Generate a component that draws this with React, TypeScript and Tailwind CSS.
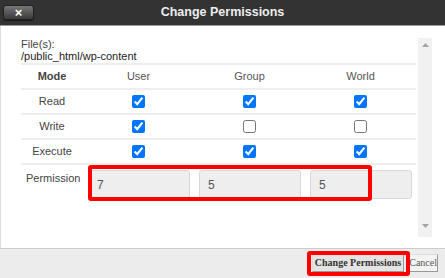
const ROWS: { label: string; user: boolean; group: boolean; world: boolean }[] = [
  { label: 'Read', user: true, group: true, world: true },
  { label: 'Write', user: true, group: false, world: false },
  { label: 'Execute', user: true, group: true, world: true },
];

function Box({ checked }: { checked: boolean }) {
  return (
    <div className="flex items-center justify-center">
      <input type="checkbox" checked={checked} readOnly className="m-0 size-[13px] accent-[#0075ff]" />
    </div>
  );
}

export default function App() {
  return (
    <div className="relative flex h-[278px] w-[445px] flex-col overflow-hidden bg-white font-['Liberation_Sans',Arial,sans-serif] text-[11px] text-[#333]">
      {/* title bar */}
      <div className="grid h-[26px] shrink-0 grid-cols-[36px_1fr_36px] items-center border-b border-[#999] bg-[#333]">
        <button className="ml-[3px] flex h-[15px] w-[31px] items-center justify-center rounded-[3px] border border-[#222] bg-gradient-to-b from-[#777] to-[#3a3a3a] text-[13px] font-bold leading-none text-white shadow-[0_1px_1px_rgba(0,0,0,0.6)]">
          ×
        </button>
        <div className="text-center text-[12.5px] font-bold text-[#eee]">Change Permissions</div>
        <div />
      </div>

      {/* body */}
      <div className="flex min-h-0 flex-1 border-l border-[#ddd]">
        <div className="flex-1 pl-[20px] pr-[2px] pt-[12px]">
          <div className="leading-[12px] text-[#444]">File(s):</div>
          <div className="leading-[13px] text-[#222]">/public_html/wp-content</div>

          <div className="grid grid-cols-[62px_111px_111px_111px] text-center">
            <div className="col-span-4 grid h-[25px] grid-cols-subgrid items-center border-t-2 border-[#eee]">
              <div className="font-bold text-[#444]">Mode</div>
              <div className="text-[#555]">User</div>
              <div className="text-[#555]">Group</div>
              <div className="text-[#555]">World</div>
            </div>
            {ROWS.map((r) => (
              <div key={r.label} className="col-span-4 grid h-[25px] grid-cols-subgrid items-center border-t-2 border-[#eee]">
                <div className="text-[#444]">{r.label}</div>
                <Box checked={r.user} />
                <Box checked={r.group} />
                <Box checked={r.world} />
              </div>
            ))}
            <div className="col-span-4 flex border-t-2 border-[#eee] pt-[5px] text-left">
              <div className="w-[67px] shrink-0 pl-[5px] text-[#444]">Permission</div>
              <div className="grid grid-cols-[102px_102px_102px] gap-[9px]">
                {['7', '5', '5'].map((v, i) => (
                  <div
                    key={i}
                    className="flex h-[29px] items-center rounded-[3px] border border-[#d8d8d8] bg-[#eeeeee] pl-[8px] text-[12px] text-[#555]"
                  >
                    {v}
                  </div>
                ))}
              </div>
            </div>
          </div>
        </div>

        {/* scrollbar */}
        <div className="mb-[11px] mr-[13px] mt-[12px] flex w-[14px] flex-col items-center justify-between bg-[#f1f1f1] py-[5px]">
          <svg width="7" height="4" viewBox="0 0 7 4">
            <path d="M0 4 L3.5 0 L7 4 Z" fill="#a3a3a3" />
          </svg>
          <svg width="7" height="4" viewBox="0 0 7 4" className="mb-[4px]">
            <path d="M0 0 L3.5 4 L7 0 Z" fill="#a3a3a3" />
          </svg>
        </div>
      </div>

      {/* footer */}
      <div className="flex h-[30px] shrink-0 items-start justify-end gap-[4px] border-t border-[#ccc] bg-[#ececec] pr-[7px] pt-[5px] font-['Liberation_Serif','Times_New_Roman',serif]">
        <button className="h-[18px] border border-[#999] border-t-[#ddd] border-l-[#ddd] bg-[#e4e4e4] px-[2px] text-[10px] font-bold leading-none text-[#333]">
          Change Permissions
        </button>
        <button className="h-[18px] border border-[#999] border-t-[#ddd] border-l-[#ddd] bg-[#f4f4f4] px-0 text-[10px] leading-none text-[#555]">
          Cancel
        </button>
      </div>

      {/* red annotation boxes */}
      <div className="pointer-events-none absolute left-[88px] top-[165px] h-[36px] w-[284px] rounded-[3px] border-4 border-[#f00]" />
      <div className="pointer-events-none absolute left-[307px] top-[251px] h-[25px] w-[103px] rounded-[3px] border-4 border-[#f00]" />
    </div>
  );
}
